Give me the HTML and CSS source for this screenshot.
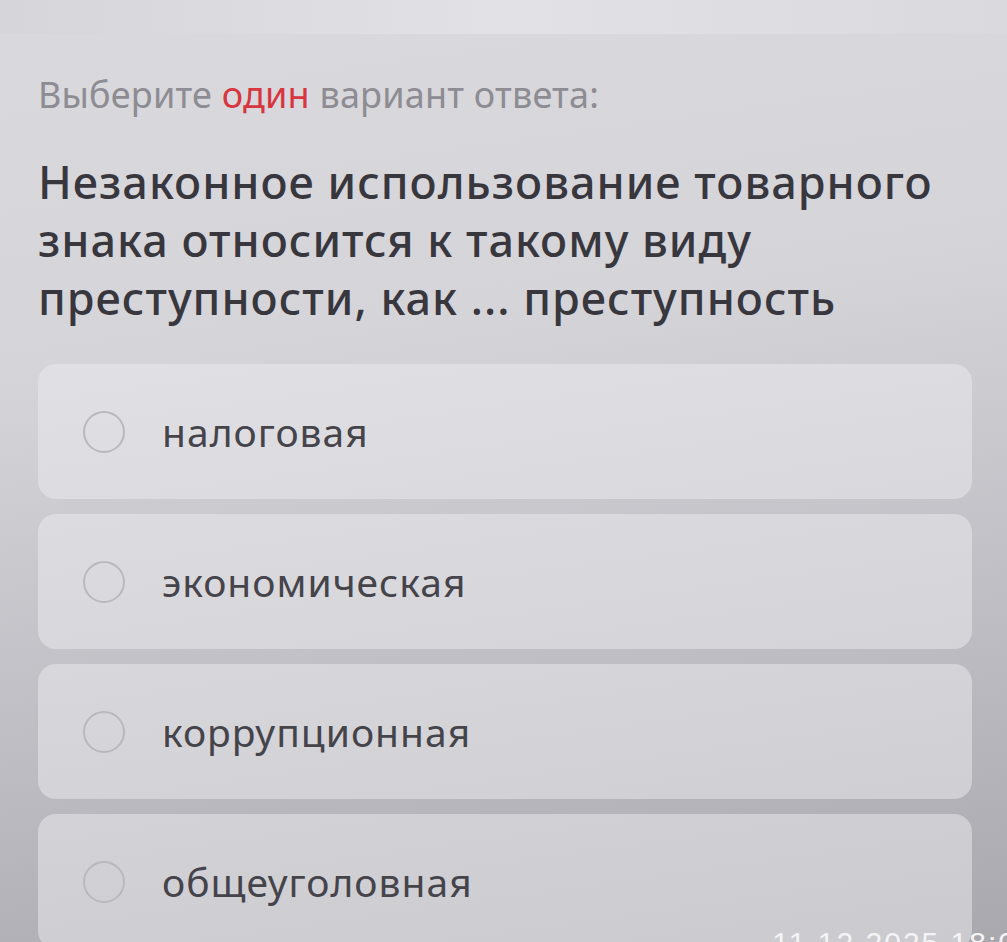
FILE: index.html
```html
<!DOCTYPE html>
<html lang="ru">
<head>
<meta charset="utf-8">
<link rel="stylesheet" href="styles.css">
</head>
<body>
<div class="screen">
  <div class="topbar"></div>
  <main class="content">
    <p class="hint">Выберите <span class="accent">один</span> вариант ответа:</p>
    <h1 class="question">Незаконное использование товарного знака относится к такому виду преступности, как ... преступность</h1>
    <div class="options">
      <label class="option"><span class="radio"></span><span class="label">налоговая</span></label>
      <label class="option"><span class="radio"></span><span class="label">экономическая</span></label>
      <label class="option"><span class="radio"></span><span class="label">коррупционная</span></label>
      <label class="option"><span class="radio"></span><span class="label">общеуголовная</span></label>
    </div>
  </main>
  <div class="stamp">11.12.2025 18:0</div>
</div>
</body>
</html>
```
FILE: styles.css
```css
* { box-sizing: border-box; }
html, body { margin: 0; padding: 0; }
body {
  width: 1007px;
  height: 942px;
  overflow: hidden;
  font-family: "Noto Sans", "Open Sans", sans-serif;
}
.screen {
  position: relative;
  width: 1007px;
  height: 942px;
  background: linear-gradient(172deg, #dad9de 0%, #d5d4d9 35%, #bebdc3 70%, #a9a8ae 100%);
  overflow: hidden;
}
.topbar {
  height: 34px;
  background: linear-gradient(90deg, #d6d5da, #e2e1e6 50%, #dad9de);
}
.content {
  padding: 38px 35px 0 38px;
}
.hint {
  margin: 0;
  font-size: 36px;
  line-height: 46px;
  color: #8d8c93;
  font-weight: 400;
  letter-spacing: 0.2px;
}
.accent { color: #d7363f; }
.question {
  margin: 35px 0 0;
  font-size: 45px;
  line-height: 58px;
  font-weight: 500;
  color: #38373e;
  letter-spacing: 1px;
  max-width: 940px;
}
.options {
  margin-top: 37px;
  display: flex;
  flex-direction: column;
  gap: 15px;
}
.option {
  display: flex;
  align-items: center;
  height: 135px;
  flex: none;
  padding-left: 45px;
  border-radius: 18px;
  background: rgba(236, 235, 240, 0.5);
}
.radio {
  width: 42px;
  height: 42px;
  border-radius: 50%;
  border: 2px solid #b9b8be;
  flex: none;
}
.label {
  margin-left: 37px;
  font-size: 39px;
  color: #45444a;
  letter-spacing: 1px;
}
.stamp {
  position: absolute;
  right: -10px;
  bottom: -18px;
  font-family: "Liberation Sans", sans-serif;
  font-size: 30px;
  color: #f4f4f6;
  letter-spacing: 2px;
}
```
